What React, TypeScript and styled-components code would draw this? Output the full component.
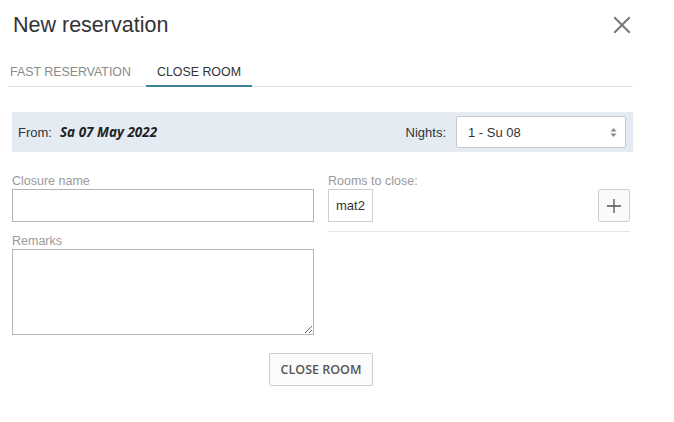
import React from "react";
import styled, { createGlobalStyle } from "styled-components";

const Global = createGlobalStyle`
  html, body { margin: 0; padding: 0; background: #fff; }
  body { font-family: "Liberation Sans", Arial, sans-serif; color: #333; }
  * { box-sizing: border-box; }
`;

const Dialog = styled.div`
  width: 645px;
  padding: 12px 12px 0 0;
`;

const Header = styled.div`
  display: flex;
  align-items: center;
  justify-content: space-between;
  height: 26px;
  padding-left: 13px;
`;

const Title = styled.h1`
  margin: 0;
  font-size: 21.5px;
  line-height: 26px;
  font-weight: normal;
  color: #333;
`;

const CloseButton = styled.button`
  border: none;
  background: none;
  padding: 0;
  width: 22px;
  height: 22px;
  display: flex;
  align-items: center;
  justify-content: center;
  cursor: pointer;
`;

const TabBar = styled.div`
  display: flex;
  margin: 20px 0 0 8px;
  border-bottom: 1px solid #e2e2e2;
  gap: 5px;
`;

const Tab = styled.div<{ $active?: boolean }>`
  height: 29px;
  padding: 0 11px;
  display: flex;
  align-items: center;
  font-size: 12.4px;
  text-transform: uppercase;
  color: ${(p) => (p.$active ? "#333" : "#8a8a8a")};
  border-bottom: 2px solid ${(p) => (p.$active ? "#3b8197" : "transparent")};
  margin-bottom: -1px;
  &:first-child { padding-left: 2px; padding-right: 10px; }
`;

const Body = styled.div`
  padding: 25px 0 0 12px;
`;

const Band = styled.div`
  height: 40px;
  background: #e5ebf3;
  display: flex;
  align-items: center;
  padding: 0 7px 0 6px;
  font-size: 13px;
`;

const FromLabel = styled.span`
  color: #333;
`;

const DateText = styled.span`
  font-family: "Open Sans", sans-serif;
  font-weight: 700;
  font-style: italic;
  font-size: 13.5px;
  color: #222;
  margin-left: 8px;
`;

const Spacer = styled.div`
  flex: 1;
`;

const NightsLabel = styled.span`
  margin-right: 10px;
  color: #333;
`;

const SelectBox = styled.div`
  width: 170px;
  height: 32px;
  background: #fff;
  border: 1px solid #c8c8c8;
  border-radius: 2px;
  display: flex;
  align-items: center;
  justify-content: space-between;
  padding: 0 8px 0 11px;
  font-size: 13px;
  color: #333;
`;

const Columns = styled.div`
  display: grid;
  grid-template-columns: 302px 302px;
  column-gap: 14px;
  margin-top: 21px;
`;

const Column = styled.div`
  display: flex;
  flex-direction: column;
`;

const Label = styled.label`
  font-size: 12.5px;
  color: #9a9a9a;
  line-height: 16px;
  height: 16px;
`;

const TextInput = styled.input`
  width: 302px;
  height: 33px;
  border: 1px solid #b4b4b4;
  border-radius: 0;
  padding: 0 8px;
  font-family: inherit;
  font-size: 13px;
  margin: 0 0 11px;
  outline: none;
`;

const TextArea = styled.textarea`
  width: 302px;
  height: 86px;
  border: 1px solid #b4b4b4;
  border-radius: 0;
  padding: 6px 8px;
  font-family: inherit;
  font-size: 13px;
  margin: 0;
  display: block;
  outline: none;
`;

const RoomsRow = styled.div`
  display: flex;
  align-items: center;
  justify-content: space-between;
  padding-bottom: 9px;
  border-bottom: 1px solid #e6e6e6;
`;

const Chip = styled.div`
  height: 33px;
  padding: 0 7px;
  border: 1px solid #cfcfcf;
  display: flex;
  align-items: center;
  font-size: 13px;
  color: #333;
`;

const PlusButton = styled.button`
  width: 32px;
  height: 33px;
  border: 1px solid #cfcfcf;
  border-radius: 2px;
  background: #fafafa;
  padding: 0;
  display: flex;
  align-items: center;
  justify-content: center;
  cursor: pointer;
`;

const Footer = styled.div`
  display: flex;
  justify-content: center;
  width: 618px;
  margin-top: 18px;
`;

const ActionButton = styled.button`
  height: 33px;
  padding: 0 11px;
  border: 1px solid #cccccc;
  border-radius: 2px;
  background: #fbfbfb;
  font-family: "Open Sans", sans-serif;
  font-weight: 600;
  font-size: 12.5px;
  color: #555;
  text-transform: uppercase;
  cursor: pointer;
`;

export default function App() {
  return (
    <>
      <Global />
      <Dialog>
        <Header>
          <Title>New reservation</Title>
          <CloseButton aria-label="Close">
            <svg width="18" height="18" viewBox="0 0 18 18">
              <path d="M2 2 L16 16 M16 2 L2 16" stroke="#777" strokeWidth="2" strokeLinecap="square" />
            </svg>
          </CloseButton>
        </Header>
        <TabBar>
          <Tab>Fast reservation</Tab>
          <Tab $active>Close room</Tab>
        </TabBar>
        <Body>
          <Band>
            <FromLabel>From:</FromLabel>
            <DateText>Sa 07 May 2022</DateText>
            <Spacer />
            <NightsLabel>Nights:</NightsLabel>
            <SelectBox>
              <span>1 - Su 08</span>
              <svg width="7" height="11" viewBox="0 0 7 11">
                <path d="M3.5 1 L6.5 4.5 L0.5 4.5 Z M3.5 10 L6.5 6.5 L0.5 6.5 Z" fill="#888" />
              </svg>
            </SelectBox>
          </Band>
          <Columns>
            <Column>
              <Label>Closure name</Label>
              <TextInput type="text" />
              <Label>Remarks</Label>
              <TextArea />
            </Column>
            <Column>
              <Label>Rooms to close:</Label>
              <RoomsRow>
                <Chip>mat2</Chip>
                <PlusButton aria-label="Add room">
                  <svg width="16" height="16" viewBox="0 0 16 16">
                    <path d="M8 1 V15 M1 8 H15" stroke="#555" strokeWidth="1.3" />
                  </svg>
                </PlusButton>
              </RoomsRow>
            </Column>
          </Columns>
          <Footer>
            <ActionButton>Close room</ActionButton>
          </Footer>
        </Body>
      </Dialog>
    </>
  );
}
